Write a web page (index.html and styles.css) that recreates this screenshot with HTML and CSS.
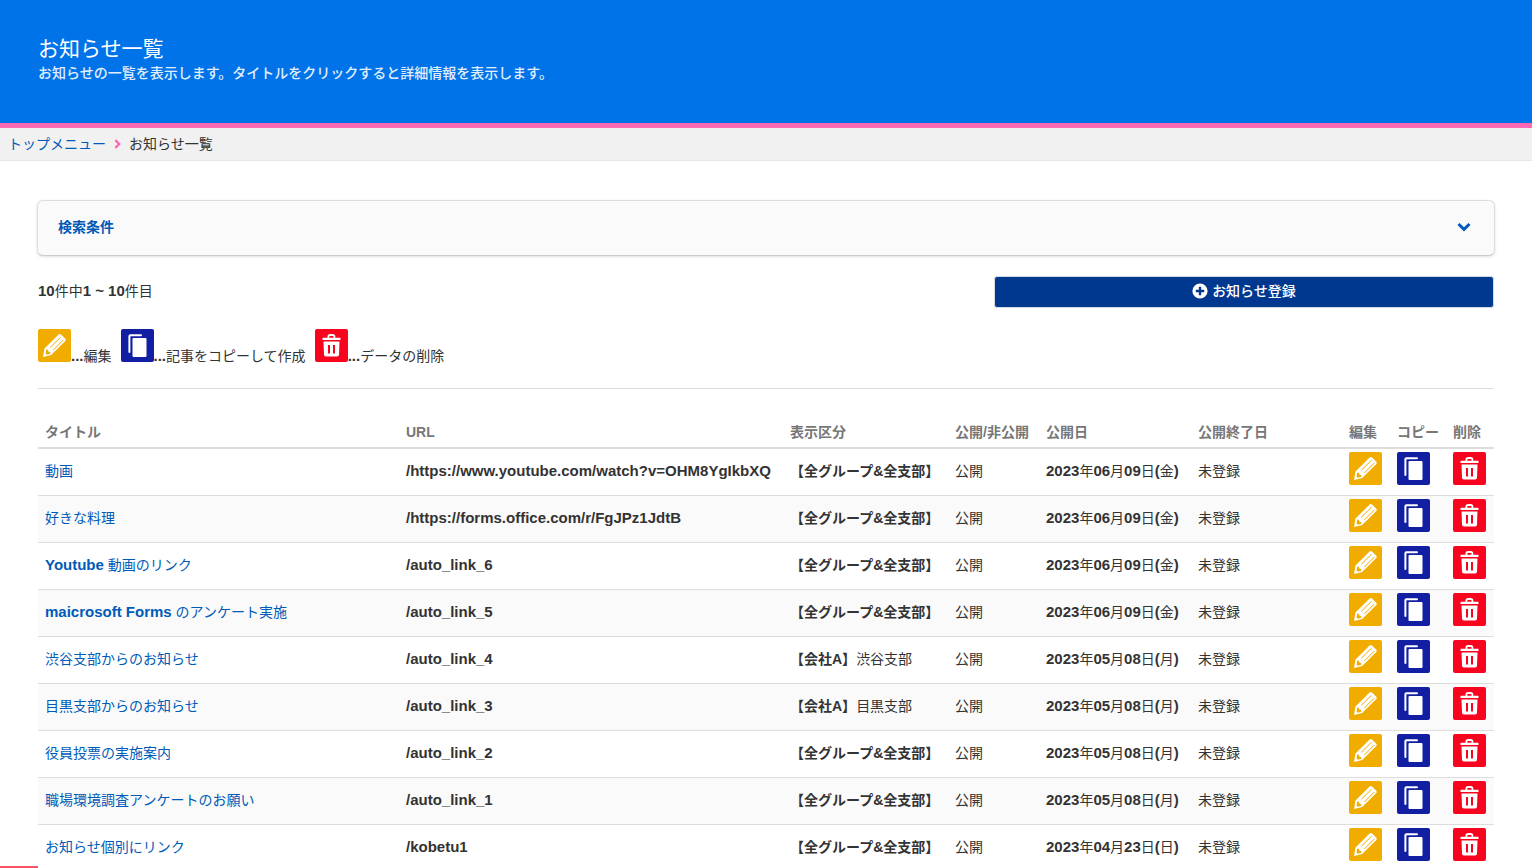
FILE: index.html
```
<!DOCTYPE html>
<html lang="ja">
<head>
<meta charset="utf-8">
<title>お知らせ一覧</title>
<link rel="stylesheet" href="styles.css">
</head>
<body>
<svg class="sprite" aria-hidden="true">
  <symbol id="edit" viewBox="0 0 33 33">
    <path d="M5 28 6.500 19.500 20.600 5.600Q21.800 4.500 23 5.600L27.300 9.700Q28.400 10.900 27.300 12L13.200 26Z" fill="#fff"/>
    <path d="M12.300 18.300 22.600 8.200M15.300 21 25.300 11" stroke="#f0ad00" stroke-width="1" fill="none"/>
    <path d="M8.300 20.600 9.800 20.800 10.400 22.600 12.200 23.200 12.300 24.700 8.700 25.700 7.600 24.600Z" fill="#f0ad00"/>
  </symbol>
  <symbol id="copy" viewBox="0 0 33 33">
    <path d="M8.400 23V7.200Q8.400 6.200 9.400 6.200H20" fill="none" stroke="#fff" stroke-width="2" stroke-linecap="round"/>
    <rect x="11.500" y="9" width="14" height="19" rx="1" fill="#fff"/>
  </symbol>
  <symbol id="trash" viewBox="0 0 33 33">
    <path d="M13.400 9.500V7.600Q13.400 6 15 6H17.800Q19.400 6 19.400 7.600V9.500" fill="none" stroke="#fff" stroke-width="1.800"/>
    <path d="M8 8.800H25Q25.500 8.800 25.500 9.500V11H7.500V9.500Q7.500 8.800 8 8.800Z" fill="#fff"/>
    <path fill-rule="evenodd" d="M8.500 12.500H24.500L24 25.700Q24 27.500 22 27.500H11Q9 27.500 9 25.700ZM13 16V24.500H15V16ZM18 16V24.500H20V16Z" fill="#fff"/>
  </symbol>
</svg>

<header class="hero">
  <h1>お知らせ一覧</h1>
  <p>お知らせの一覧を表示します。タイトルをクリックすると詳細情報を表示します。</p>
</header>
<nav class="crumbs" aria-label="パンくず">
  <a href="#">トップメニュー</a>
  <svg width="7" height="10" viewBox="0 0 7 10" aria-hidden="true"><path d="M1.400 1.200 5.200 5 1.400 8.800" fill="none" stroke="#ff69b4" stroke-width="2.400"/></svg>
  <span>お知らせ一覧</span>
</nav>

<main class="content">
  <button class="search" type="button" aria-expanded="false">
    <span>検索条件</span>
    <svg width="14" height="10" viewBox="0 0 14 10" aria-hidden="true"><path d="M1.500 2 7 7.300 12.500 2" fill="none" stroke="#005bb8" stroke-width="3"/></svg>
  </button>

  <div class="toolbar">
    <p><b>10</b>件中<b>1 ~ 10</b>件目</p>
    <button class="register" type="button">
      <svg width="16" height="16" viewBox="0 0 16 16" aria-hidden="true"><circle cx="8" cy="8" r="7.600" fill="#fff"/><path d="M8 3.800V12.200M3.800 8H12.200" stroke="#00378f" stroke-width="2.300"/></svg>
      お知らせ登録
    </button>
  </div>

  <div class="legend">
    <span><svg class="icon edit"><use href="#edit"/></svg><b>...</b>編集</span>
    <span><svg class="icon copy"><use href="#copy"/></svg><b>...</b>記事をコピーして作成</span>
    <span><svg class="icon trash"><use href="#trash"/></svg><b>...</b>データの削除</span>
  </div>

  <table class="news">
    <colgroup>
      <col><col class="c-url"><col class="c-group"><col class="c-state"><col class="c-date"><col class="c-end"><col class="c-edit"><col class="c-copy"><col class="c-del">
    </colgroup>
    <thead>
      <tr><th>タイトル</th><th>URL</th><th>表示区分</th><th>公開/非公開</th><th>公開日</th><th>公開終了日</th><th>編集</th><th>コピー</th><th>削除</th></tr>
    </thead>
    <tbody id="rows"></tbody>
  </table>
</main>
<div class="progress"></div>
<script src="rows.js"></script>
</body>
</html>
```

FILE: rows.js
```
const all = '<strong>【全グループ&amp;全支部】</strong>';
const rows = [
  ['動画', '/https://www.youtube.com/watch?v=OHM8YgIkbXQ', all, '06', '09', '金'],
  ['好きな料理', '/https://forms.office.com/r/FgJPz1JdtB', all, '06', '09', '金'],
  ['<b>Youtube</b> 動画のリンク', '/auto_link_6', all, '06', '09', '金'],
  ['<b>maicrosoft Forms</b> のアンケート実施', '/auto_link_5', all, '06', '09', '金'],
  ['渋谷支部からのお知らせ', '/auto_link_4', '<strong>【会社A】</strong>渋谷支部', '05', '08', '月'],
  ['目黒支部からのお知らせ', '/auto_link_3', '<strong>【会社A】</strong>目黒支部', '05', '08', '月'],
  ['役員投票の実施案内', '/auto_link_2', all, '05', '08', '月'],
  ['職場環境調査アンケートのお願い', '/auto_link_1', all, '05', '08', '月'],
  ['お知らせ個別にリンク', '/kobetu1', all, '04', '23', '日']
];
const action = (name, label) =>
  `<td><button class="action" type="button" aria-label="${label}"><svg class="icon ${name}"><use href="#${name}"/></svg></button></td>`;
document.getElementById('rows').innerHTML = rows.map(([title, url, group, month, day, week]) => `
  <tr>
    <td><a href="#">${title}</a></td>
    <td><b>${url}</b></td>
    <td>${group}</td>
    <td>公開</td>
    <td><b>2023</b>年<b>${month}</b>月<b>${day}</b>日<b>(</b>${week}<b>)</b></td>
    <td>未登録</td>
    ${action('edit', '編集')}${action('copy', 'コピー')}${action('trash', '削除')}
  </tr>`).join('');
```

FILE: styles.css
```
* { box-sizing: border-box; }
body {
  margin: 0;
  background: #fff;
  color: #333;
  font: 400 14px/20px "Liberation Sans", "Noto Sans CJK JP", sans-serif;
}
h1, p { margin: 0; }
a { color: #005bb8; text-decoration: none; }
b { font-size: 15px; font-weight: 700; }
strong { font-weight: 700; }
button { font: inherit; cursor: pointer; }
.sprite { display: none; }

.hero {
  padding: 36px 38px 39px;
  background: #0073e8;
  border-bottom: 5px solid #ff69b4;
  color: #fff;
}
.hero h1 { font-size: 21px; line-height: 26px; font-weight: 400; }
.hero p { line-height: 22px; font-weight: 500; color: #e0eefc; }

.crumbs {
  display: flex;
  align-items: center;
  gap: 8px;
  padding: 6px 8px;
  background: #f1f1f1;
  border-bottom: 1px solid #e7e7e7;
}

.content { padding: 39px 37px 0; }
.search {
  display: flex;
  justify-content: space-between;
  align-items: center;
  width: 100%;
  padding: 16px 23px 18px 20px;
  border: 1px solid #ddd;
  border-bottom-color: #ccc;
  border-radius: 6px;
  background: #fafafa;
  box-shadow: 0 1px 3px rgba(0, 0, 0, .12);
  color: #005bb8;
  font-weight: 700;
}
.toolbar {
  display: flex;
  justify-content: space-between;
  align-items: flex-start;
  padding: 20px 1px 21px;
}
.toolbar p { padding-top: 5px; }
.register {
  display: flex;
  justify-content: center;
  align-items: center;
  gap: 4px;
  width: 500px;
  padding: 4px 5px 6px;
  border: 1px solid #d5d9e2;
  border-radius: 3px;
  background: #00378f;
  color: #fff;
  font-weight: 500;
}
.legend {
  display: flex;
  gap: 9px;
  margin: 0 1px;
  padding-bottom: 22px;
  border-bottom: 1px solid #ddd;
}
.legend span { display: flex; align-items: flex-end; }
.legend .icon { margin-bottom: 4px; }
.icon { display: block; width: 33px; height: 33px; border-radius: 2px; }
.edit { background: #f0ad00; }
.copy { background: #121fa3; }
.trash { background: #f7051f; }
.action { display: block; padding: 0; border: 0; background: none; }

.news {
  width: calc(100% - 2px);
  margin: 28px 1px 0;
  border-collapse: collapse;
  table-layout: fixed;
}
.c-url { width: 384px; }
.c-group { width: 165px; }
.c-state { width: 91px; }
.c-date { width: 152px; }
.c-end { width: 151px; }
.c-edit, .c-del { width: 48px; }
.c-copy { width: 56px; }
.news th, .news td { padding: 0 7px; text-align: left; white-space: nowrap; }
.news th { height: 31px; color: #777; border-bottom: 2px solid #ddd; }
.news td { height: 47px; padding-bottom: 2px; border-bottom: 1px solid #ddd; }
.news td:nth-last-child(-n+3) { padding-bottom: 6px; }
.news tr:nth-child(even) td { background: #fafafa; }

.progress {
  position: fixed;
  left: 0;
  bottom: 0;
  width: 38px;
  height: 2px;
  background: #f95368;
}
```
